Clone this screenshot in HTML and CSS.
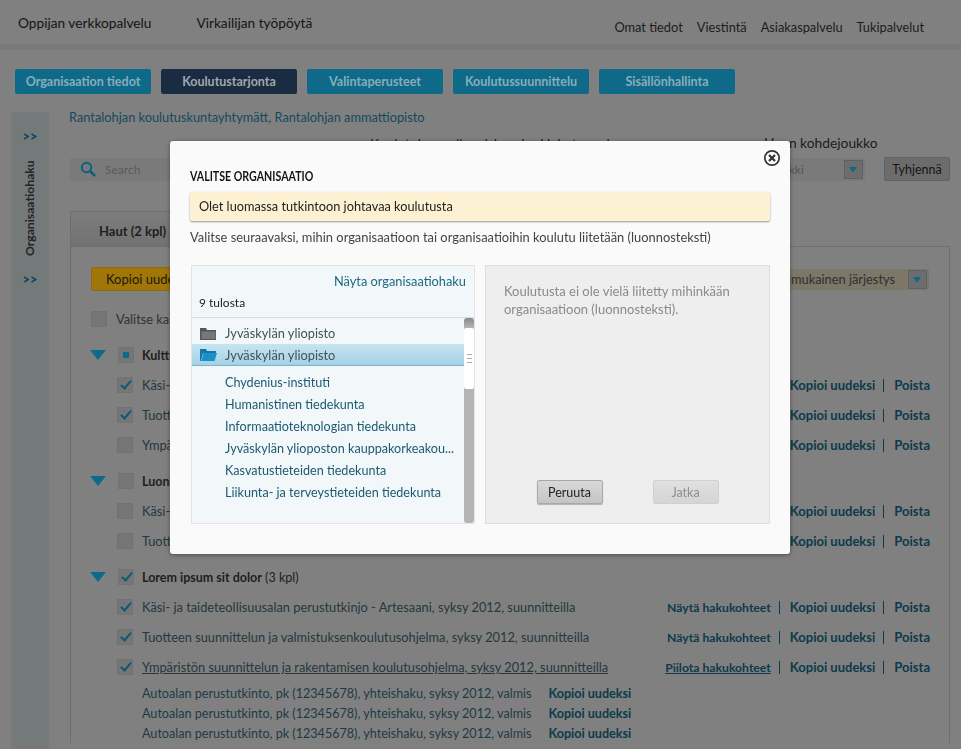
FILE: index.html
```html
<!DOCTYPE html>
<html lang="fi">
<head>
    <meta charset="UTF-8">
    <meta name="viewport" content="width=device-width, initial-scale=1.0">
    <title>Virkailijan työpöytä</title>
    <link rel="stylesheet" href="styles.css">
</head>
<body>
    <header class="topbar">
        <nav class="topbar-left">
            <a>Oppijan verkkopalvelu</a>
            <a>Virkailijan työpöytä</a>
        </nav>
        <nav class="topbar-right">
            <a>Omat tiedot</a>
            <a>Viestintä</a>
            <a>Asiakaspalvelu</a>
            <a>Tukipalvelut</a>
        </nav>
    </header>

    <nav class="mainnav">
        <a class="mainnav-item">Organisaation tiedot</a>
        <a class="mainnav-item active">Koulutustarjonta</a>
        <a class="mainnav-item">Valintaperusteet</a>
        <a class="mainnav-item">Koulutussuunnittelu</a>
        <a class="mainnav-item">Sisällönhallinta</a>
    </nav>

    <div class="layout">
        <aside class="sidebar">
            <span class="sidebar-arrows">&gt;&gt;</span>
            <span class="sidebar-title">Organisaatiohaku</span>
            <span class="sidebar-arrows">&gt;&gt;</span>
        </aside>

        <main class="content">
            <p class="breadcrumb">Rantalohjan koulutuskuntayhtymätt, Rantalohjan ammattiopisto</p>

            <div class="filters">
                <div class="search">
                    <svg class="search-icon" width="16" height="17" viewBox="0 0 16 17">
                        <circle cx="6.5" cy="6.5" r="4.7" fill="none" stroke="#0e5f80" stroke-width="2"/>
                        <path d="M10 10l5 5" stroke="#0e5f80" stroke-width="2.6"/>
                    </svg>
                    <span>Search</span>
                </div>
                <div class="filter filter-a">
                    <label>Koulutuksen alkamiskausi</label>
                </div>
                <div class="filter filter-b">
                    <label>Hakutyyppi</label>
                </div>
                <div class="filter filter-c">
                    <label>Haun kohdejoukko</label>
                    <div class="select">
                        <span>Kaikki</span>
                        <span class="select-btn"></span>
                    </div>
                </div>
                <button class="clear-btn">Tyhjennä</button>
            </div>

            <section class="panel">
                <div class="panel-tabs">
                    <span class="panel-tab">Haut (2 kpl)</span>
                </div>
                <div class="panel-body">
                    <div class="toolbar">
                        <button class="copy-btn">Kopioi uudeksi</button>
                        <div class="select select-sort">
                            <span>Nimen mukainen järjestys</span>
                            <span class="select-btn"></span>
                        </div>
                    </div>

                    <div class="select-all"><span class="check"></span>Valitse kaikki</div>

                    <div class="group">
                        <span class="tri"></span><span class="check partial"></span>
                        <span class="group-name"><b>Kulttuuriala</b> (3 kpl)</span>
                    </div>
                    <div class="row"><span class="check on"></span><span class="row-text">Käsi- ja taideteollisuusalan perustutkinjo</span><span class="actions"><a>Kopioi uudeksi</a><i></i><a>Poista</a></span></div>
                    <div class="row"><span class="check on"></span><span class="row-text">Tuotteen suunnittelun ja valmistuksenkoulutusohjelma</span><span class="actions"><a>Kopioi uudeksi</a><i></i><a>Poista</a></span></div>
                    <div class="row"><span class="check"></span><span class="row-text">Ympäristön suunnittelun koulutusohjelma</span><span class="actions"><a>Kopioi uudeksi</a><i></i><a>Poista</a></span></div>

                    <div class="group">
                        <span class="tri"></span><span class="check"></span>
                        <span class="group-name"><b>Luonnontieteet</b> (2 kpl)</span>
                    </div>
                    <div class="row"><span class="check"></span><span class="row-text">Käsi- ja taideteollisuusalan perustutkinjo</span><span class="actions"><a>Kopioi uudeksi</a><i></i><a>Poista</a></span></div>
                    <div class="row"><span class="check"></span><span class="row-text">Tuotteen suunnittelun ja valmistuksenkoulutusohjelma</span><span class="actions"><a>Kopioi uudeksi</a><i></i><a>Poista</a></span></div>

                    <div class="group">
                        <span class="tri"></span><span class="check on"></span>
                        <span class="group-name"><b>Lorem ipsum sit dolor</b> (3 kpl)</span>
                    </div>
                    <div class="row"><span class="check on"></span><span class="row-text">Käsi- ja taideteollisuusalan perustutkinjo - Artesaani, syksy 2012, suunnitteilla</span><span class="actions"><a class="toggle">Näytä hakukohteet</a><i></i><a>Kopioi uudeksi</a><i></i><a>Poista</a></span></div>
                    <div class="row"><span class="check on"></span><span class="row-text">Tuotteen suunnittelun ja valmistuksenkoulutusohjelma, syksy 2012, suunnitteilla</span><span class="actions"><a class="toggle">Näytä hakukohteet</a><i></i><a>Kopioi uudeksi</a><i></i><a>Poista</a></span></div>
                    <div class="row"><span class="check on"></span><span class="row-text open">Ympäristön suunnittelun ja rakentamisen koulutusohjelma, syksy 2012, suunnitteilla</span><span class="actions"><a class="toggle open">Piilota hakukohteet</a><i></i><a>Kopioi uudeksi</a><i></i><a>Poista</a></span></div>
                    <div class="subrow first-sub"><span>Autoalan perustutkinto, pk (12345678), yhteishaku, syksy 2012, valmis</span><a>Kopioi uudeksi</a></div>
                    <div class="subrow"><span>Autoalan perustutkinto, pk (12345678), yhteishaku, syksy 2012, valmis</span><a>Kopioi uudeksi</a></div>
                    <div class="subrow"><span>Autoalan perustutkinto, pk (12345678), yhteishaku, syksy 2012, valmis</span><a>Kopioi uudeksi</a></div>
                </div>
            </section>
        </main>
    </div>

    <!-- Modal -->
    <div class="modal">
        <svg class="modal-close" width="18" height="18" viewBox="0 0 18 18">
            <circle cx="9" cy="9" r="7.2" fill="none" stroke="#333" stroke-width="1.7"/>
            <path d="M6 6l6 6M12 6l-6 6" stroke="#333" stroke-width="2.2"/>
        </svg>
        <h3 class="modal-title">VALITSE ORGANISAATIO</h3>
        <div class="notice">Olet luomassa tutkintoon johtavaa koulutusta</div>
        <p class="modal-intro">Valitse seuraavaksi, mihin organisaatioon tai organisaatioihin koulutu liitetään (luonnosteksti)</p>

        <div class="modal-cols">
            <div class="org-box">
                <div class="org-head">
                    <a class="org-link">Näyta organisaatiohaku</a>
                    <span class="org-count">9 tulosta</span>
                </div>
                <div class="org-scroll">
                    <ul class="org-list">
                        <li class="org-parent">
                            <svg width="17" height="13" viewBox="0 0 17 13"><path d="M0 1h6l1 2h9v10H0z" fill="#555"/><path d="M1.500 4.500h14V12h-14z" fill="#777"/></svg>
                            Jyväskylän yliopisto
                        </li>
                        <li class="org-parent selected">
                            <svg width="17" height="13" viewBox="0 0 17 13"><path d="M0 1h6l1 2h9v2H3L1 13H0z" fill="#1477a8"/><path d="M3.500 5H17l-2.500 8H1.500z" fill="#1b8fc8"/></svg>
                            Jyväskylän yliopisto
                        </li>
                        <li class="org-child first-child">Chydenius-instituti</li>
                        <li class="org-child">Humanistinen tiedekunta</li>
                        <li class="org-child">Informaatioteknologian tiedekunta</li>
                        <li class="org-child">Jyväskylän ylioposton kauppakorkeakou...</li>
                        <li class="org-child">Kasvatustieteiden tiedekunta</li>
                        <li class="org-child">Liikunta- ja terveystieteiden tiedekunta</li>
                    </ul>
                    <div class="scrollbar"><div class="scrollbar-thumb"><span class="scrollbar-grip"></span></div></div>
                </div>
            </div>

            <div class="selected-box">
                <p>Koulutusta ei ole vielä liitetty mihinkään organisaatioon (luonnosteksti).</p>
                <div class="modal-buttons">
                    <button class="btn">Peruuta</button>
                    <button class="btn disabled">Jatka</button>
                </div>
            </div>
        </div>
    </div>
</body>
</html>
```

FILE: styles.css
```css
html {
    background-color: #808080;
}
body {
    font-family: Lato, "Noto Sans", sans-serif;
    font-size: 12.8px;
    background-color: #808080;
    color: #1a1a1a;
    margin: 0;
}
p {
    margin: 0;
}
button {
    font-family: inherit;
}

/* Ylapalkki */
.topbar {
    height: 50px;
    box-sizing: border-box;
    display: flex;
    justify-content: space-between;
    padding: 0 37px 0 18px;
    border-bottom: 6px solid #797979;
}
.topbar-left {
    display: flex;
    gap: 45px;
    padding-top: 14px;
    font-size: 13.7px;
    color: #141414;
}
.topbar-right {
    display: flex;
    gap: 14px;
    padding-top: 19px;
    font-size: 12.8px;
    color: #1c1c1c;
}

/* Paavalikko */
.mainnav {
    display: flex;
    gap: 10px;
    padding: 19px 0 0 15px;
}
.mainnav-item {
    width: 136px;
    height: 25px;
    line-height: 25px;
    text-align: center;
    background-color: #0f6a8a;
    border-radius: 2px;
    color: #86aeb9;
    font-weight: bold;
    font-size: 12.5px;
}
.mainnav-item.active {
    background-color: #1a2c42;
    color: #a0a8ad;
}

.layout {
    display: flex;
    padding: 16px 11px 0 11px;
    gap: 20px;
}

/* Sivupalkki */
.sidebar {
    width: 38px;
    height: 637px;
    margin-top: 2px;
    flex-shrink: 0;
    box-sizing: border-box;
    background-color: #747979;
    border: 1px solid #797979;
    display: flex;
    flex-direction: column;
    align-items: center;
    padding-top: 15px;
}
.sidebar-arrows {
    color: #0b3f5c;
    font-weight: 900;
    font-size: 13px;
    line-height: 16px;
}
.sidebar-title {
    writing-mode: vertical-rl;
    transform: rotate(180deg);
    margin: 16px 0 15px;
    height: 96px;
    line-height: 14px;
    font-weight: bold;
    font-size: 12.2px;
    color: #1f2426;
    text-align: left;
}

.content {
    flex-grow: 1;
    min-width: 0;
}
.breadcrumb {
    color: #15495c;
    line-height: 14px;
    margin-bottom: 12px;
}

/* Suodattimet */
.filters {
    display: flex;
    align-items: flex-start;
    height: 48px;
    margin-left: 1px;
    margin-bottom: 27px;
}
.search {
    width: 290px;
    height: 23px;
    margin-top: 22px;
    box-sizing: border-box;
    background-color: #7a7a7a;
    display: flex;
    align-items: center;
    gap: 9px;
    padding-left: 10px;
    color: #5a5a5a;
    font-size: 12px;
}
.filter label {
    color: #1c1c1c;
    font-size: 13.8px;
    line-height: 14px;
}
.filter-a {
    margin-left: 10px;
    width: 170px;
}
.filter-b {
    width: 224px;
}
.filter-c {
    width: 101px;
    display: flex;
    flex-direction: column;
    gap: 8px;
    white-space: nowrap;
}
.select {
    display: flex;
    align-items: center;
    justify-content: space-between;
    height: 23px;
    box-sizing: border-box;
    background-color: #7a7a7a;
    padding: 0 2px 0 8px;
    color: #555;
    font-size: 12px;
}
.select-btn {
    width: 19px;
    height: 19px;
    box-sizing: border-box;
    background-color: #6d6d6d;
    border: 1px solid #5a6468;
    position: relative;
}
.select-btn::after {
    content: "";
    position: absolute;
    left: 4px;
    top: 6px;
    border-left: 4.5px solid transparent;
    border-right: 4.5px solid transparent;
    border-top: 6px solid #0e6a8a;
}
.clear-btn {
    margin: 21px 0 0 auto;
    width: 66px;
    height: 24px;
    flex-shrink: 0;
    padding: 0;
    background-color: #6c6c6c;
    border: 1px solid #626262;
    border-radius: 2px;
    font-size: 12.5px;
    color: #151515;
}

/* Paneeli */
.panel {
    width: 880px;
    margin-left: 1px;
}
.panel-tabs {
    height: 36px;
    box-sizing: border-box;
    border-bottom: 1px solid #6e6e6e;
    display: flex;
}
.panel-tab {
    padding: 0 15px 0 28px;
    line-height: 38px;
    height: 35px;
    box-sizing: border-box;
    border-top: 1px solid #6e6e6e;
    border-left: 1px solid #6e6e6e;
    background: linear-gradient(#7c7c7c, #727272);
    font-weight: bold;
    font-size: 13px;
    color: #1f1f1f;
}
.panel-body {
    padding: 20px 19px 0 19px;
    border-left: 1px solid #6e6e6e;
    border-right: 1px solid #6e6e6e;
}
.toolbar {
    display: flex;
    justify-content: space-between;
    align-items: center;
    height: 24px;
}
.copy-btn {
    width: 140px;
    height: 24px;
    margin-left: 1px;
    padding: 0 0 0 14px;
    text-align: left;
    background-color: #a07608;
    border: 1px solid #8c6a10;
    border-radius: 3px;
    font-size: 13px;
    color: #1d1608;
}
.select-sort {
    width: 220px;
    margin-right: 1px;
    background-color: #7c7768;
    justify-content: flex-end;
    gap: 13px;
    color: #2f2f2f;
    height: 21px;
    font-size: 12.8px;
}
.select-all {
    display: flex;
    align-items: center;
    gap: 9px;
    margin-top: 18px;
    margin-left: 1px;
    height: 20px;
    color: #2c3335;
}
.check {
    width: 16px;
    height: 16px;
    flex-shrink: 0;
    box-sizing: border-box;
    background-color: #767676;
    border: 1px solid #727272;
    position: relative;
}
.check.on::after {
    content: "";
    position: absolute;
    left: 5px;
    top: 0;
    width: 4px;
    height: 9px;
    border-right: 2px solid #0d5a78;
    border-bottom: 2px solid #0d5a78;
    transform: rotate(40deg);
}
.check.partial::after {
    content: "";
    position: absolute;
    left: 4px;
    top: 4px;
    width: 6px;
    height: 6px;
    background-color: #0e6a8a;
}
.group, .row, .subrow {
    display: flex;
    align-items: center;
}
.group {
    height: 20px;
    margin-top: 16px;
    color: #1e1e1e;
}
.tri {
    width: 0;
    height: 0;
    margin-right: 12px;
    border-left: 8px solid transparent;
    border-right: 8px solid transparent;
    border-top: 10px solid #0e6a8a;
}
.group .check {
    margin-right: 8px;
}
.group-name {
    font-size: 12.5px;
}
.row {
    height: 20px;
    margin-top: 10px;
    padding-left: 27px;
    color: #26373d;
}
.row .check {
    margin-right: 9px;
}
.row-text.open {
    text-decoration: underline;
}
.actions {
    margin-left: auto;
    display: flex;
    align-items: center;
    font-weight: bold;
    font-size: 13px;
    color: #0c3a4a;
}
.actions i {
    width: 1px;
    height: 13px;
    margin: 0 10px 0 8px;
    background-color: #0c3a4a;
}
.actions .toggle {
    font-size: 12.2px;
}
.actions .open {
    text-decoration: underline;
}
.subrow {
    padding-left: 52px;
    height: 20px;
    color: #1f3a44;
    font-size: 12.6px;
}
.subrow.first-sub {
    margin-top: 6px;
}
.subrow a {
    margin-left: 17px;
    font-weight: bold;
    color: #0c3a4a;
}

/* Modaali */
.modal {
    position: fixed;
    left: 170px;
    top: 141px;
    width: 620px;
    height: 413px;
    box-sizing: border-box;
    padding: 27px 20px 30px;
    background-color: #fafafa;
    border-radius: 3px;
    box-shadow: 0 1px 4px rgba(0,0,0,0.4);
}
.modal-close {
    position: absolute;
    right: 9px;
    top: 8px;
}
.modal-title {
    margin: 0 0 8px;
    font-size: 14px;
    line-height: 16px;
    font-weight: bold;
    color: #141414;
    white-space: nowrap;
    transform: scaleX(0.76);
    transform-origin: left;
}
.notice {
    height: 29px;
    line-height: 29px;
    padding-left: 9px;
    background-color: #fdf1d3;
    border-radius: 2px;
    box-shadow: 0 1px 2px rgba(0,0,0,0.4);
    color: #222;
    font-size: 12.75px;
}
.modal-intro {
    margin-top: 9px;
    line-height: 15px;
    color: #444;
    font-size: 12.9px;
}
.modal-cols {
    display: flex;
    gap: 10px;
    margin-top: 20px;
    margin-left: 1px;
}
.org-box {
    width: 284px;
    height: 259px;
    box-sizing: border-box;
    background-color: #f2f7fa;
    border: 1px solid #e4e4e4;
    display: flex;
    flex-direction: column;
}
.org-head {
    display: flex;
    flex-direction: column;
    height: 52px;
    flex-shrink: 0;
    box-sizing: border-box;
    padding: 8px 8px 0 7px;
    border-bottom: 1px solid #dcdcdc;
}
.org-link {
    align-self: flex-end;
    color: #1c6a80;
    line-height: 15px;
}
.org-count {
    margin-top: 6px;
    font-size: 12px;
    line-height: 15px;
    color: #222;
}
.org-scroll {
    flex-grow: 1;
    display: flex;
    min-height: 0;
}
.org-list {
    list-style: none;
    margin: 0;
    padding: 4px 0 0;
    flex-grow: 1;
    min-width: 0;
}
.org-parent {
    height: 22px;
    display: flex;
    align-items: center;
    gap: 8px;
    padding-left: 8px;
    color: #3f5358;
}
.org-parent.selected {
    background: linear-gradient(#c8e4f0, #a3d2e6);
    border-bottom: 1px solid #7fb3c8;
    box-sizing: border-box;
}
.org-child {
    height: 22px;
    line-height: 22px;
    padding-left: 33px;
    color: #1c5a72;
    white-space: nowrap;
    font-size: 12.6px;
}
.org-child.first-child {
    margin-top: 6px;
}
.scrollbar {
    width: 10px;
    flex-shrink: 0;
    background: linear-gradient(#8a8a8a, #b5b5b5 10px);
    border-radius: 3px;
    padding-top: 10px;
    box-sizing: border-box;
}
.scrollbar-thumb {
    height: 61px;
    background-color: #fff;
    border-radius: 2px;
    display: flex;
    align-items: center;
    justify-content: center;
}
.scrollbar-grip {
    width: 5px;
    height: 7px;
    border-top: 1px solid #aaa;
    border-bottom: 1px solid #aaa;
    background: linear-gradient(#aaa, #aaa) center / 100% 1px no-repeat;
}
.selected-box {
    width: 285px;
    height: 259px;
    box-sizing: border-box;
    background-color: #eeeeee;
    border: 1px solid #dedede;
    padding: 16px 18px 0;
    display: flex;
    flex-direction: column;
    color: #8a8a8a;
    line-height: 18px;
    font-size: 13px;
}
.modal-buttons {
    margin-top: auto;
    margin-bottom: 19px;
    display: flex;
    justify-content: center;
    gap: 50px;
}
.btn {
    width: 66px;
    height: 24px;
    padding: 0;
    font-size: 12.5px;
    color: #222;
    background: linear-gradient(#d8d8d8, #c4c4c4);
    border: 1px solid #a8a8a8;
    border-radius: 2px;
    box-shadow: 0 1px 1px rgba(0,0,0,0.25);
}
.btn.disabled {
    color: #8f8f8f;
    background: linear-gradient(#e0e0e0, #d4d4d4);
    border-color: #d0d0d0;
    box-shadow: none;
}
```
